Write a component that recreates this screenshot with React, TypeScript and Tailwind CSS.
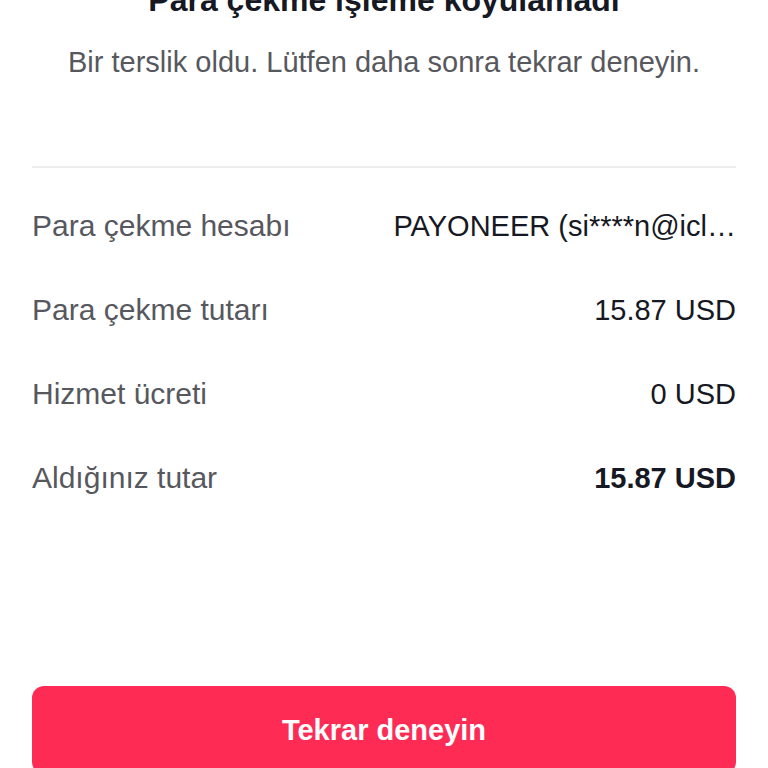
const rows = [
  { label: "Para çekme hesabı", value: "PAYONEER (si****n@icl…", bold: false },
  { label: "Para çekme tutarı", value: "15.87 USD", bold: false },
  { label: "Hizmet ücreti", value: "0 USD", bold: false },
  { label: "Aldığınız tutar", value: "15.87 USD", bold: true },
];

export default function App() {
  return (
    <div
      className="h-[768px] w-[768px] overflow-hidden bg-white px-8"
      style={{ fontFamily: '"Liberation Sans", Arial, sans-serif' }}
    >
      {/* Header */}
      <h1 className="-mt-[20px] text-center text-[32px] font-bold leading-[40px] text-[#161823]">
        Para çekme işleme koyulamadı
      </h1>
      <p className="mt-[24px] text-center text-[29px] leading-[36px] text-[#57585e]">
        Bir terslik oldu. Lütfen daha sonra tekrar deneyin.
      </p>

      <div className="mt-[86px] h-[2px] bg-[#ececed]"></div>

      {/* Details */}
      <div className="mt-[16px] flex flex-col">
        {rows.map((row) => (
          <div key={row.label} className="flex h-[84px] items-center justify-between gap-6">
            <span className="shrink-0 text-[30px] leading-[36px] text-[#57585e]">{row.label}</span>
            <span
              className={
                row.bold
                  ? "truncate text-[29px] font-bold leading-[36px] text-[#161823]"
                  : "truncate text-[29px] leading-[36px] text-[#161823]"
              }
            >
              {row.value}
            </span>
          </div>
        ))}
      </div>

      {/* Action */}
      <button className="mt-[166px] flex h-[88px] w-full items-center justify-center rounded-xl bg-[#fe2c55] text-[29px] font-semibold leading-[36px] text-white">
        Tekrar deneyin
      </button>
    </div>
  );
}
